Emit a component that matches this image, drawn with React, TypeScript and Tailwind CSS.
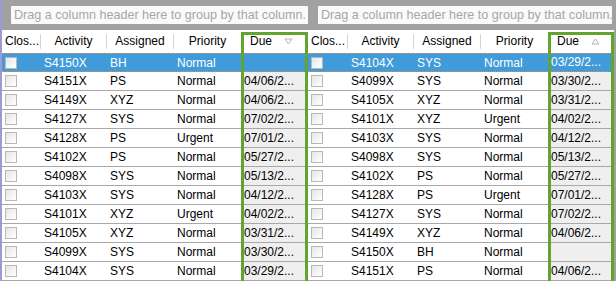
import React from 'react';

type Row = { id: string; who: string; pri: string; due: string };

const leftRows: Row[] = [
  { id: 'S4150X', who: 'BH', pri: 'Normal', due: '' },
  { id: 'S4151X', who: 'PS', pri: 'Normal', due: '04/06/2...' },
  { id: 'S4149X', who: 'XYZ', pri: 'Normal', due: '04/06/2...' },
  { id: 'S4127X', who: 'SYS', pri: 'Normal', due: '07/02/2...' },
  { id: 'S4128X', who: 'PS', pri: 'Urgent', due: '07/01/2...' },
  { id: 'S4102X', who: 'PS', pri: 'Normal', due: '05/27/2...' },
  { id: 'S4098X', who: 'SYS', pri: 'Normal', due: '05/13/2...' },
  { id: 'S4103X', who: 'SYS', pri: 'Normal', due: '04/12/2...' },
  { id: 'S4101X', who: 'XYZ', pri: 'Urgent', due: '04/02/2...' },
  { id: 'S4105X', who: 'XYZ', pri: 'Normal', due: '03/31/2...' },
  { id: 'S4099X', who: 'SYS', pri: 'Normal', due: '03/30/2...' },
  { id: 'S4104X', who: 'SYS', pri: 'Normal', due: '03/29/2...' },
];

const rightRows: Row[] = [
  { id: 'S4104X', who: 'SYS', pri: 'Normal', due: '03/29/2...' },
  { id: 'S4099X', who: 'SYS', pri: 'Normal', due: '03/30/2...' },
  { id: 'S4105X', who: 'XYZ', pri: 'Normal', due: '03/31/2...' },
  { id: 'S4101X', who: 'XYZ', pri: 'Urgent', due: '04/02/2...' },
  { id: 'S4103X', who: 'SYS', pri: 'Normal', due: '04/12/2...' },
  { id: 'S4098X', who: 'SYS', pri: 'Normal', due: '05/13/2...' },
  { id: 'S4102X', who: 'PS', pri: 'Normal', due: '05/27/2...' },
  { id: 'S4128X', who: 'PS', pri: 'Urgent', due: '07/01/2...' },
  { id: 'S4127X', who: 'SYS', pri: 'Normal', due: '07/02/2...' },
  { id: 'S4149X', who: 'XYZ', pri: 'Normal', due: '04/06/2...' },
  { id: 'S4150X', who: 'BH', pri: 'Normal', due: '' },
  { id: 'S4151X', who: 'PS', pri: 'Normal', due: '04/06/2...' },
];

function SortGlyph({ up }: { up: boolean }) {
  return (
    <svg width="9" height="7" viewBox="0 0 9 7" className="shrink-0">
      {up ? (
        <path d="M4.5 1 L8 6 L1 6 Z" fill="none" stroke="#b4b4b4" strokeWidth="1" />
      ) : (
        <path d="M1 1 L8 1 L4.5 6 Z" fill="none" stroke="#b4b4b4" strokeWidth="1" />
      )}
    </svg>
  );
}

function Check() {
  return <div className="w-[12px] h-[12px] border border-[#b8b8b8] bg-gradient-to-br from-[#e6e6e6] to-white" />;
}

function Grid({ rows, widths, up, border }: { rows: Row[]; widths: number[]; up: boolean; border: boolean }) {
  const cols = widths.map((w) => w + 'px').join(' ');
  return (
    <div className={border ? 'flex flex-col w-[308px] border-l-2 border-[#9a9ad4]' : 'flex flex-col w-[306px]'}>
      <div className={border ? 'h-[31px] bg-[#a1a1a1] pl-[9px] pt-[6px]' : 'h-[31px] bg-[#a1a1a1] pl-[10px] pr-[2px] pt-[6px]'}>
        <div className="h-[18px] bg-[#fafafa] pl-[3px] text-[12.6px] leading-[18px] text-[#a6a6a6] whitespace-nowrap overflow-hidden">
          Drag a column header here to group by that column.
        </div>
      </div>
      <div className="relative bg-white">
        <div className="grid h-[23px] items-center text-[12px] text-black" style={{ gridTemplateColumns: cols }}>
          <div className="pl-[3px] border-r border-[#d4d4d4] h-[15px] leading-[15px]">Clos...</div>
          <div className="text-center border-r border-[#d4d4d4] h-[15px] leading-[15px]">Activity</div>
          <div className="text-center border-r border-[#d4d4d4] h-[15px] leading-[15px]">Assigned</div>
          <div className="text-center h-[15px] leading-[15px]">Priority</div>
          <div className="flex items-center gap-[12px] pl-[9px] h-[15px] leading-[15px]">
            <span>Due</span>
            <SortGlyph up={up} />
          </div>
        </div>
        {rows.map((r, i) => {
          const sel = i === 0;
          return (
            <div
              key={i}
              className={
                sel
                  ? 'grid h-[19px] items-center text-[12px] text-white bg-[#3f9bd9] border-y border-dotted border-y-[#e58a4e]'
                  : 'grid h-[19px] items-center text-[12px] text-black border-b border-[#a8a8a8]'
              }
              style={{ gridTemplateColumns: cols }}
            >
              <div className="pl-[3px] flex items-center">
                <Check />
              </div>
              <div className="pl-[3px]">{r.id}</div>
              <div className="pl-[3px]">{r.who}</div>
              <div className="pl-[3px]">{r.pri}</div>
              <div className={sel ? 'h-full pl-[3px] leading-[17px] overflow-hidden whitespace-nowrap' : 'h-full pl-[3px] leading-[18px] bg-[#efefef] overflow-hidden whitespace-nowrap'}>
                {r.due}
              </div>
            </div>
          );
        })}
        <div
          className="absolute top-[2px] bottom-[-4px] border-[3px] border-[#63a431] pointer-events-none"
          style={{ left: widths.slice(0, 4).reduce((a, b) => a + b, 0), width: widths[4] }}
        />
      </div>
    </div>
  );
}

export default function App() {
  return (
    <div className="flex w-[616px] h-[281px] overflow-hidden bg-[#a1a1a1] font-['Liberation_Sans',Arial,sans-serif]">
      <Grid rows={leftRows} widths={[39, 66, 67, 67, 67]} up={false} border />
      <Grid rows={rightRows} widths={[40, 66, 67, 67, 66]} up={true} border={false} />
    </div>
  );
}
